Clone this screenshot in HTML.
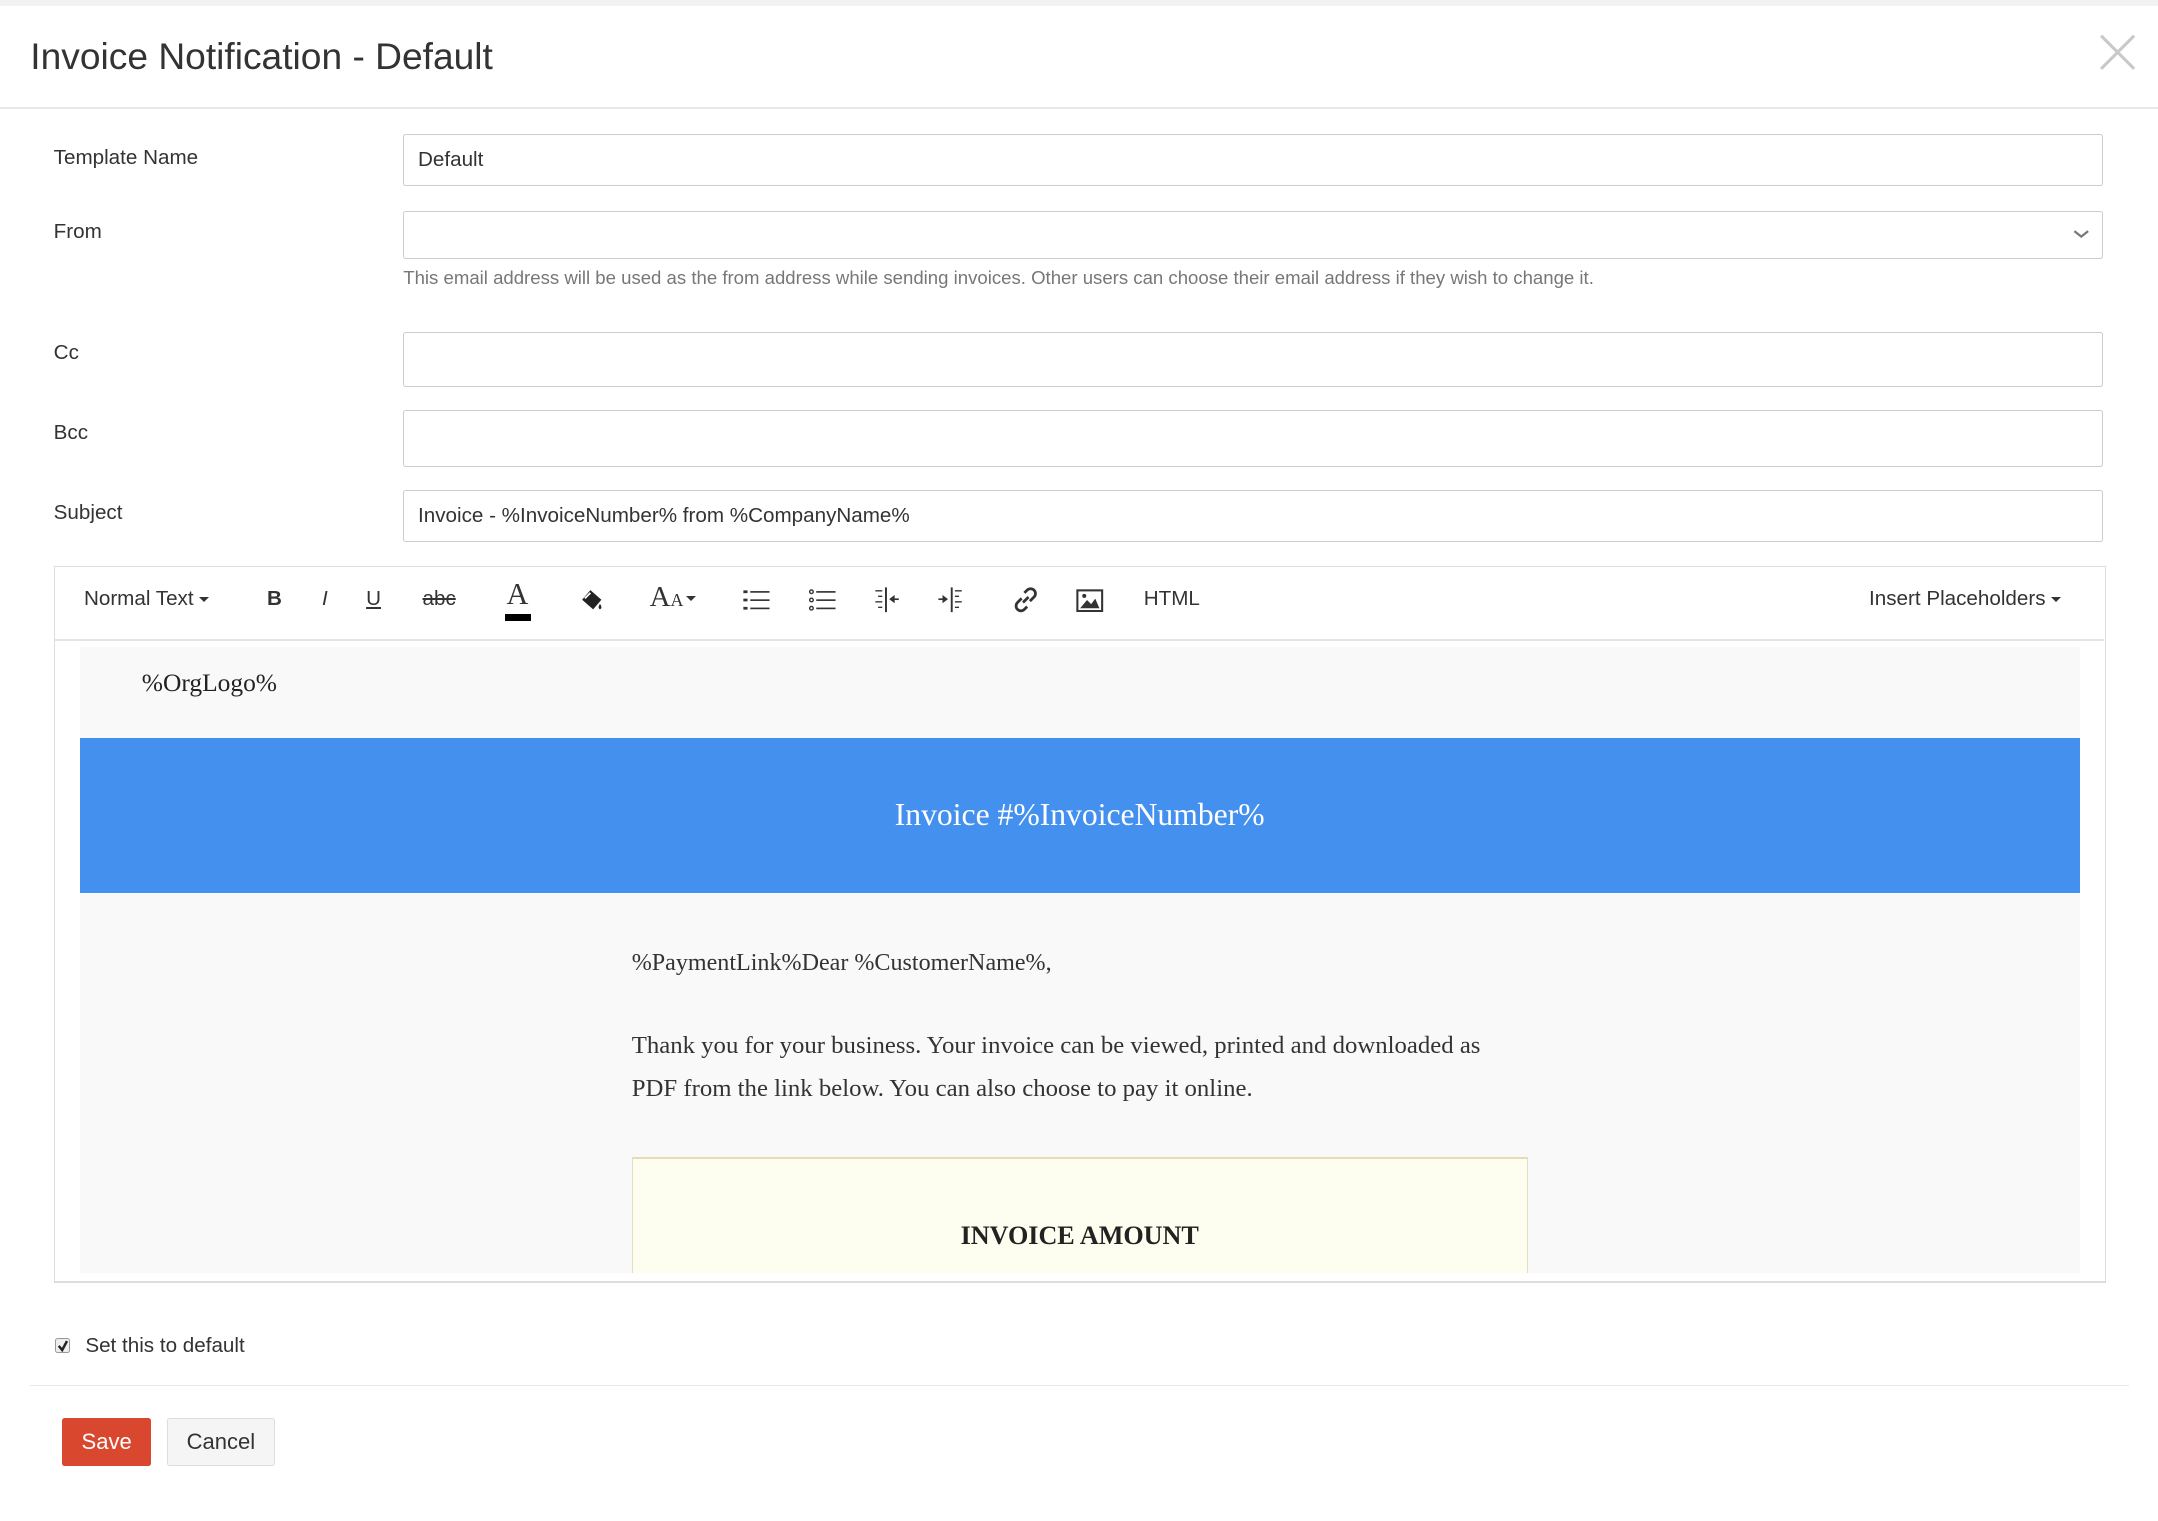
<!DOCTYPE html>
<html><head><meta charset="utf-8"><style>
html,body{margin:0;padding:0;background:#fff;overflow:hidden}
body{width:2158px;height:1520px}
#w{position:absolute;left:0;top:0;width:1568px;height:1105px;zoom:1.3763;font-family:"Liberation Sans",sans-serif;color:#333}
.a{position:absolute}
.lbl{position:absolute;left:39px;font-size:15px;line-height:18px}
.inp{position:absolute;left:293px;width:1235px;border:1px solid #ccc;border-radius:2px;background:#fff;font-size:15px;box-sizing:border-box;padding-left:10px}
.tb{position:absolute;top:425px;font-size:15px;line-height:20px;color:#333}
.serif{font-family:"Liberation Serif",serif}
.caret{display:inline-block;width:0;height:0;border-left:4px solid transparent;border-right:4px solid transparent;border-top:4px solid #333;vertical-align:middle;margin-left:4px}
</style></head><body><div id="w">
<div class="a" style="left:0;top:0;width:1568px;height:4px;background:#f2f2f2"></div>
<div class="a" style="left:22px;top:24px;font-size:27px;line-height:34px;color:#333;font-weight:300">Invoice Notification - Default</div>
<svg class="a" style="left:1524px;top:24px" width="30" height="28"><path d="M3 2L27 26M27 2L3 26" stroke="#c8c8c8" stroke-width="2.2" fill="none"/></svg>
<div class="a" style="left:0;top:78px;width:1568px;height:1px;background:#e8e8e8"></div>

<div class="lbl" style="top:106px">Template Name</div>
<div class="inp" style="top:97px;height:38px;line-height:36px">Default</div>
<div class="lbl" style="top:160px">From</div>
<div class="inp" style="top:153px;height:35px"></div>
<svg class="a" style="left:1506px;top:165px" width="12" height="10"><path d="M1 3L6 7L11 3" stroke="#777" stroke-width="1.6" fill="none"/></svg>
<div class="a" style="left:293px;top:194px;font-size:13.5px;color:#777;line-height:16px;white-space:nowrap">This email address will be used as the from address while sending invoices. Other users can choose their email address if they wish to change it.</div>
<div class="lbl" style="top:248px">Cc</div>
<div class="inp" style="top:241px;height:40px"></div>
<div class="lbl" style="top:306px">Bcc</div>
<div class="inp" style="top:298px;height:41px"></div>
<div class="lbl" style="top:364px">Subject</div>
<div class="inp" style="top:356px;height:38px;line-height:36px">Invoice - %InvoiceNumber% from %CompanyName%</div>

<div class="a" style="left:39px;top:411px;width:1491px;height:521px;border:1px solid #ddd;box-sizing:border-box;border-bottom:2px solid #ddd"></div>
<div class="a" style="left:40px;top:464px;width:1489px;height:2px;background:#e4e4e4"></div>
<div class="tb" style="left:61px">Normal Text<span class="caret"></span></div>
<div class="tb" style="left:194px;font-weight:bold">B</div>
<div class="tb" style="left:234px;font-style:italic">I</div>
<div class="tb" style="left:266px;text-decoration:underline">U</div>
<div class="tb" style="left:307px;text-decoration:line-through">abc</div>
<div class="tb" style="left:368px;font-family:'Liberation Serif',serif;font-size:22px;top:422px">A</div>
<div class="a" style="left:367px;top:446px;width:19px;height:5px;background:#000"></div>
<svg class="a" style="left:420px;top:426px" width="20" height="20"><path d="M3 10L9 3L17 10L11 17Z" fill="#222"/><path d="M5 9L9 5" stroke="#fff" stroke-width="1.3"/><path d="M16 13q2 3 0 4q-2-1 0-4z" fill="#222"/></svg>
<div class="tb" style="left:472px;font-family:'Liberation Serif',serif;font-size:21px;top:424px">A<span style="font-size:13px">A</span><span class="caret" style="margin-left:2px"></span></div>
<svg class="a" style="left:539px;top:428px" width="22" height="16"><g fill="#333"><rect x="1" y="1" width="3" height="2"/><rect x="1" y="7" width="3" height="2"/><rect x="1" y="13" width="3" height="2"/><rect x="6" y="1.5" width="14" height="1.2"/><rect x="6" y="7.5" width="14" height="1.2"/><rect x="6" y="13.5" width="14" height="1.2"/></g></svg>
<svg class="a" style="left:587px;top:428px" width="22" height="16"><g fill="none" stroke="#333" stroke-width="1"><circle cx="2.5" cy="2" r="1.3"/><circle cx="2.5" cy="8" r="1.3"/><circle cx="2.5" cy="14" r="1.3"/></g><g fill="#333"><rect x="6" y="1.5" width="14" height="1.2"/><rect x="6" y="7.5" width="14" height="1.2"/><rect x="6" y="13.5" width="14" height="1.2"/></g></svg>
<svg class="a" style="left:635px;top:426px" width="20" height="20"><g fill="#333"><rect x="1" y="3" width="5" height="1"/><rect x="3" y="7" width="3" height="1"/><rect x="1" y="11" width="5" height="1"/><rect x="3" y="15" width="3" height="1"/><rect x="8" y="1" width="1.4" height="18"/><path d="M11 9.5L15 6.5V12.5Z"/><rect x="14" y="9" width="4" height="1.2"/></g></svg>
<svg class="a" style="left:681px;top:426px" width="20" height="20"><g fill="#333"><path d="M8 9.5L4 6.5V12.5Z"/><rect x="1" y="9" width="4" height="1.2"/><rect x="10" y="1" width="1.4" height="18"/><rect x="13" y="3" width="5" height="1"/><rect x="13" y="7" width="3" height="1"/><rect x="13" y="11" width="5" height="1"/><rect x="13" y="15" width="3" height="1"/></g></svg>
<svg class="a" style="left:735px;top:426px" width="20" height="20"><g fill="none" stroke="#333" stroke-width="2"><path d="M9 5l2-2a3 3 0 0 1 5 5l-3 3"/><path d="M11 15l-2 2a3 3 0 0 1-5-5l3-3"/><path d="M8 12l4-4"/></g></svg>
<svg class="a" style="left:782px;top:428px" width="20" height="17"><rect x="1" y="1" width="18" height="15" fill="none" stroke="#333" stroke-width="1.5"/><path d="M3 14L8 8L11 11L14 7L17 14Z" fill="#333"/><circle cx="6" cy="5" r="1.5" fill="#333"/></svg>
<div class="tb" style="left:831px">HTML</div>
<div class="tb" style="left:1358px">Insert Placeholders<span class="caret"></span></div>

<div class="a" style="left:58px;top:470px;width:1453px;height:455px;background:#f9f9f9"></div>
<div class="a serif" style="left:103px;top:485px;font-size:18.5px;line-height:22px;color:#222">%OrgLogo%</div>
<div class="a" style="left:58px;top:536px;width:1453px;height:113px;background:#4390ef"></div>
<div class="a serif" style="left:58px;top:578px;width:1453px;text-align:center;font-size:23px;line-height:28px;color:#fff">Invoice #%InvoiceNumber%</div>
<div class="a serif" style="left:459px;top:688px;font-size:17.5px;line-height:24px;color:#333">%PaymentLink%Dear %CustomerName%,</div>
<div class="a serif" style="left:459px;top:745px;width:645px;font-size:18px;line-height:31px;color:#333">Thank you for your business. Your invoice can be viewed, printed and downloaded as PDF from the link below. You can also choose to pay it online.</div>
<div class="a" style="left:459px;top:841px;width:651px;height:84px;background:#fefef0;border:1px solid #e8dfb8;border-top:2px solid #e5dcb2;border-bottom:none;box-sizing:border-box"></div>
<div class="a serif" style="left:459px;top:886px;width:651px;text-align:center;font-size:19px;font-weight:bold;line-height:24px;color:#222">INVOICE AMOUNT</div>

<div class="a" style="left:40px;top:972px;width:11px;height:11px;border:1px solid #999;border-radius:2px;background:#eee;box-sizing:border-box"></div>
<svg class="a" style="left:41px;top:973px" width="10" height="10"><path d="M2 5L4.5 8L8 1.5" stroke="#222" stroke-width="1.8" fill="none"/></svg>
<div class="a" style="left:62px;top:969px;font-size:15px;line-height:18px">Set this to default</div>
<div class="a" style="left:22px;top:1006px;width:1525px;height:1px;background:#e8e8e8"></div>
<div class="a" style="left:45px;top:1030px;width:65px;height:35px;background:#d9472f;border-radius:2px;color:#fff;font-size:16px;line-height:35px;text-align:center">Save</div>
<div class="a" style="left:121px;top:1030px;width:79px;height:35px;background:#f5f5f5;border:1px solid #ddd;border-radius:2px;box-sizing:border-box;font-size:16px;line-height:33px;text-align:center;color:#333">Cancel</div>
</div></body></html>
